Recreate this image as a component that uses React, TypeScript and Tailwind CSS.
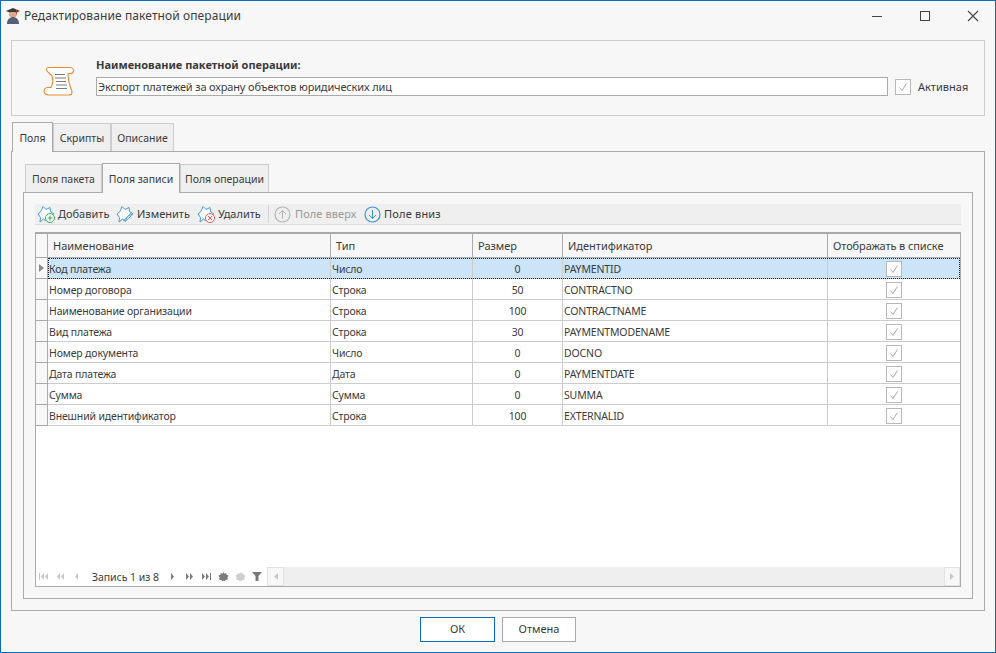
import { ReactNode } from "react";

const fields = [
  { name: "Код платежа", type: "Число", size: "0", id: "PAYMENTID" },
  { name: "Номер договора", type: "Строка", size: "50", id: "CONTRACTNO" },
  { name: "Наименование организации", type: "Строка", size: "100", id: "CONTRACTNAME" },
  { name: "Вид платежа", type: "Строка", size: "30", id: "PAYMENTMODENAME" },
  { name: "Номер документа", type: "Число", size: "0", id: "DOCNO" },
  { name: "Дата платежа", type: "Дата", size: "0", id: "PAYMENTDATE" },
  { name: "Сумма", type: "Сумма", size: "0", id: "SUMMA" },
  { name: "Внешний идентификатор", type: "Строка", size: "100", id: "EXTERNALID" },
];

function Check() {
  return (
    <svg width="16" height="16" viewBox="0 0 16 16" className="block">
      <rect x="0.5" y="0.5" width="15" height="15" fill="#fff" stroke="#b8b8b8" />
      <path d="M4.500 8.500 L7 11.500 L11.500 4.500" fill="none" stroke="#a8a8a8" strokeWidth="1" />
    </svg>
  );
}

function Star({ children }: { children?: ReactNode }) {
  return (
    <svg width="19" height="19" viewBox="0 0 19 19" className="shrink-0">
      <path
        d="M6 1.500 L9 4.500 L13 2.500 L13.500 6.500 L17 9 L12 11 L9 16 L6.500 14 L3 17 L3.500 12.500 L1 9 L4 6.500 Z"
        fill="#fff"
        stroke="#4a9bd4"
        strokeWidth="1"
        strokeLinejoin="round"
      />
      {children}
    </svg>
  );
}

function Arrow({ up, color }: { up?: boolean; color: string }) {
  return (
    <svg width="17" height="17" viewBox="0 0 17 17" className="shrink-0">
      <circle cx="8.500" cy="8.500" r="7.500" fill="none" stroke={color} strokeWidth="1.200" />
      <path
        d={up ? "M8.500 13V4.500M5 8l3.500-3.500L12 8" : "M8.500 4v8.500M5 9l3.500 3.500L12 9"}
        fill="none"
        stroke={color}
        strokeWidth="1"
      />
    </svg>
  );
}

function Nav({ d, color = "#7a7a7a" }: { d: string; color?: string }) {
  return (
    <svg width="11" height="9" viewBox="0 0 11 9" className="shrink-0">
      <path d={d} fill={color} />
    </svg>
  );
}

const FIRST = "M1 1h1v7H1zM6 1v7L3 4.500zM10 1v7L7 4.500z";
const PREV2 = "M5 1v7L2 4.500zM9 1v7L6 4.500z";
const PREV = "M7 1v7L4 4.500z";
const NEXT = "M4 1v7l3-3.500z";
const NEXT2 = "M2 1v7l3-3.500zM6 1v7l3-3.500z";
const LAST = "M1 1v7l3-3.500zM5 1v7l3-3.500zM9 1h1v7H9z";
const GEAR = "M5.500 0l1 1.700 1.800-.7.3 1.900 1.900.3-.7 1.800-.8.5.8.5-.3 1.800-1.900.3-1 1.100-1.100-.6-1.100.6-1-1.100-1.900-.3-.3-1.800.8-.5-.8-.5-.7-1.800 1.900-.3.3-1.900 1.800.7z";

function Tab({ label, active, w }: { label: string; active?: boolean; w: string }) {
  return (
    <div
      className={`${w} flex items-center justify-center border border-b-0 text-[10.5px] ${
        active
          ? "h-[30px] -mb-px relative z-10 border-[#aaaaaa] bg-[#f7f7f7] pt-[2px]"
          : "h-[28px] border-[#cccccc] bg-[#efefef] pt-[3px]"
      }`}
    >
      {label}
    </div>
  );
}

export default function App() {
  return (
    <div
      className="w-[996px] h-[653px] flex flex-col bg-[#f7f7f7] border border-[#0f6cbd] text-[#3b3b3b] text-[11px] overflow-hidden"
      style={{ fontFamily: '"Noto Sans", sans-serif' }}
    >
      {/* Title bar */}
      <div className="h-[30px] shrink-0 flex items-center">
        <svg width="16" height="18" viewBox="0 0 16 18" className="ml-[4px] shrink-0">
          <path d="M1 4 L8 1 L15 4 L8 7 Z" fill="#3a3a3a" />
          <rect x="4" y="5" width="8" height="5" rx="2" fill="#d8a98a" />
          <path d="M11 3h1v4h-1z" fill="#c8402a" />
          <path d="M2 17c0-5 3-7 6-7s6 2 6 7z" fill="#566178" />
        </svg>
        <span className="ml-[3px] pb-[1px] text-[12px] tracking-[0.1px]">Редактирование пакетной операции</span>
        <div className="ml-auto flex items-center">
          <svg width="12" height="12" viewBox="0 0 12 12" className="mr-[36px]"><path d="M1 6.500h10" stroke="#444" /></svg>
          <svg width="12" height="12" viewBox="0 0 12 12" className="mr-[36px]"><rect x="1.500" y="1.500" width="9" height="9" fill="none" stroke="#444" /></svg>
          <svg width="12" height="12" viewBox="0 0 12 12" className="mr-[16px]"><path d="M1 1l10 10M11 1L1 11" stroke="#444" strokeWidth="1.100" /></svg>
        </div>
      </div>

      {/* Operation name */}
      <div className="mx-[10px] mt-[9px] h-[76px] shrink-0 border border-[#cccccc] flex">
        <svg width="32" height="32" viewBox="0 0 32 32" className="ml-[31px] mt-[25px] shrink-0">
          <path
            d="M5 1.500h22c2 0 3.500 1.500 3.500 3s-1 3-3 3H25c0 5 1 10 2.500 14 .8 2 1.500 3 1.500 4.500 0 1.500-1 3-3 3H6c-3 0-5-2-5-4s2-3.500 4-3.500h3c2-4 2.500-8 1-11.500C7.500 7.500 3.500 6 3.500 3.500 3.500 2.500 4 1.500 5 1.500z"
            fill="#fff"
            stroke="#f08a32"
            strokeWidth="1.100"
            strokeLinejoin="round"
          />
          <path d="M12 8.500h10M12 12h11M13 15.500h10M13 19h11M13 22.500h11" stroke="#7b7b7b" strokeWidth="1" />
        </svg>
        <div className="ml-[21px] flex-1 pt-[15px]">
          <div className="font-bold h-[17px] leading-[17px]">Наименование пакетной операции:</div>
          <div className="flex items-center mt-[4px]">
            <div className="w-[792px] h-[19px] border border-[#aaaaaa] bg-white px-[1px] leading-[17px] tracking-[-0.15px]">
              Экспорт платежей за охрану объектов юридических лиц
            </div>
            <div className="ml-[7px]"><Check /></div>
            <span className="ml-[7px] pt-[2px]">Активная</span>
          </div>
        </div>
      </div>

      {/* Outer tabs */}
      <div className="mx-[10px] pl-px mt-[6px] flex h-[29px] shrink-0 items-end">
        <Tab label="Поля" active w="w-[41px]" />
        <Tab label="Скрипты" w="w-[58px]" />
        <Tab label="Описание" w="w-[63px]" />
      </div>
      <div className="mx-[10px] h-[460px] shrink-0 border border-[#aaaaaa] px-[11px] pt-[11px]">
        {/* Inner tabs */}
        <div className="flex h-[29px] pl-[2px] items-end">
          <Tab label="Поля пакета" w="w-[77px]" />
          <Tab label="Поля записи" active w="w-[78px]" />
          <Tab label="Поля операции" w="w-[89px]" />
        </div>
        <div className="h-[407px] border border-[#aaaaaa] px-[11px] pt-[11px]">
          {/* Toolbar */}
          <div className="h-[21px] bg-[#efefef] border-b border-[#dddddd] flex items-center pl-[2px]">
            <Star>
              <circle cx="13" cy="13" r="4.500" fill="#fff" stroke="#3fae5a" />
              <path d="M13 10.500v5M10.500 13h5" stroke="#3fae5a" />
            </Star>
            <span className="ml-[2px] w-[58px]">Добавить</span>
            <Star>
              <path d="M7 16L16 7M9 17L17 9" stroke="#6aaee0" strokeWidth="1" />
            </Star>
            <span className="ml-[2px] w-[60px]">Изменить</span>
            <Star>
              <circle cx="13" cy="13" r="4.500" fill="#fff" stroke="#e8605a" />
              <path d="M11 11l4 4M15 11l-4 4" stroke="#e8605a" />
            </Star>
            <span className="ml-[2px] w-[50px]">Удалить</span>
            <div className="w-px h-[18px] bg-[#d2d2d2] mr-[5px]" />
            <Arrow up color="#b4b4b4" />
            <span className="ml-[4px] w-[69px] text-[#9a9a9a] tracking-[0.1px]">Поле вверх</span>
            <Arrow color="#3c92d6" />
            <span className="ml-[3px] tracking-[0.2px]">Поле вниз</span>
          </div>

          {/* Grid */}
          <div className="mt-[7px] h-[355px] border border-[#aaaaaa] border-t-[2px] bg-white flex flex-col">
            <div className="grid grid-cols-[12px_283px_142px_90px_265px_132px] h-[24px] bg-[#f7f7f7] border-b border-[#aaaaaa] shrink-0">
              <div className="border-r border-[#aaaaaa]" />
              <div className="border-r border-[#aaaaaa] pl-[5px] leading-[23px]">Наименование</div>
              <div className="border-r border-[#aaaaaa] pl-[5px] leading-[23px]">Тип</div>
              <div className="border-r border-[#aaaaaa] pl-[5px] leading-[23px]">Размер</div>
              <div className="border-r border-[#aaaaaa] pl-[5px] leading-[23px]">Идентификатор</div>
              <div className="pl-[5px] leading-[23px] tracking-[-0.1px]">Отображать в списке</div>
            </div>
            {fields.map((f, i) => (
              <div key={f.id} className="flex h-[21px] shrink-0 text-[10.5px] tracking-[-0.15px]">
                <div className="w-[12px] bg-[#f7f7f7] border-r border-b border-[#aaaaaa] flex items-center justify-center">
                  {i === 0 && (
                    <svg width="5" height="8" viewBox="0 0 5 8"><path d="M0 0l5 4-5 4z" fill="#8a8a8a" /></svg>
                  )}
                </div>
                <div className={`grid grid-cols-[283px_142px_90px_265px_132px] grid-rows-[21px] h-[21px] ${i === 0 ? "bg-[#cce4f7] outline-1 -outline-offset-1 outline-dotted outline-[#222]" : ""}`}>
                  <div className="border-r border-b border-[#cccccc] pl-[1px] pt-[1px] leading-[21px] overflow-hidden whitespace-nowrap">{f.name}</div>
                  <div className="border-r border-b border-[#cccccc] pl-[1px] pt-[1px] leading-[21px] overflow-hidden">{f.type}</div>
                  <div className="border-r border-b border-[#cccccc] pt-[1px] text-center leading-[21px] overflow-hidden">{f.size}</div>
                  <div className="border-r border-b border-[#cccccc] pl-[1px] pt-[1px] leading-[21px] overflow-hidden">{f.id}</div>
                  <div className="border-b border-[#cccccc] pt-[1px] flex items-center justify-center"><Check /></div>
                </div>
              </div>
            ))}

            {/* Record navigator */}
            <div className="mt-auto h-[19px] shrink-0 flex items-center pl-[2px]">
              <Nav d={FIRST} color="#c8c8c8" />
              <div className="ml-[6px]"><Nav d={PREV2} color="#c8c8c8" /></div>
              <div className="ml-[5px]"><Nav d={PREV} color="#c8c8c8" /></div>
              <span className="ml-[10px] w-[75px] pt-[2px] text-[10.5px] tracking-[-0.05px]">Запись 1 из 8</span>
              <Nav d={NEXT} />
              <div className="ml-[6px]"><Nav d={NEXT2} /></div>
              <div className="ml-[6px]"><Nav d={LAST} /></div>
              <div className="ml-[6px]"><Nav d={GEAR} /></div>
              <div className="ml-[6px]"><Nav d={GEAR} color="#cfcfcf" /></div>
              <svg width="11" height="9" viewBox="0 0 11 9" className="ml-[6px] shrink-0"><path d="M0 0h10L6.500 4v5h-3V4z" fill="#777" /></svg>
              <div className="ml-[4px] flex-1 h-[19px] bg-[#efefef] flex justify-between">
                <div className="w-[17px] h-[19px] bg-[#f7f7f7] border border-[#e2e2e2] flex items-center justify-center">
                  <svg width="4" height="7" viewBox="0 0 4 7"><path d="M4 0v7L0 3.500z" fill="#c8c8c8" /></svg>
                </div>
                <div className="w-[16px] h-[19px] bg-[#f7f7f7] border border-[#e2e2e2] flex items-center justify-center">
                  <svg width="4" height="7" viewBox="0 0 4 7"><path d="M0 0v7l4-3.500z" fill="#c8c8c8" /></svg>
                </div>
              </div>
            </div>
          </div>
        </div>
      </div>

      {/* Buttons */}
      <div className="mt-[6px] flex justify-center gap-[7px]">
        <button className="w-[75px] h-[25px] border border-[#0f6cbd] bg-white">ОК</button>
        <button className="w-[74px] h-[25px] border border-[#aaaaaa] bg-white">Отмена</button>
      </div>
    </div>
  );
}
